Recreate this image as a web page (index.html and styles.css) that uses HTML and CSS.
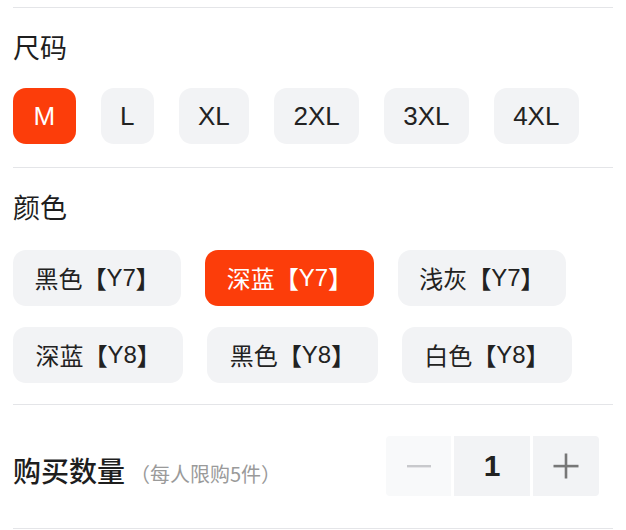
FILE: index.html
```html
<!DOCTYPE html>
<html lang="zh">
<head>
<meta charset="utf-8">
<link rel="stylesheet" href="styles.css">
</head>
<body>
<div class="panel">
  <section class="sec sec-size">
    <h2 class="title">尺码</h2>
    <div class="opts">
      <span class="opt active m">M</span>
      <span class="opt">L</span>
      <span class="opt">XL</span>
      <span class="opt">2XL</span>
      <span class="opt">3XL</span>
      <span class="opt">4XL</span>
    </div>
  </section>
  <section class="sec sec-color">
    <h2 class="title">颜色</h2>
    <div class="opts opts-color">
      <span class="opt copt"><span class="cn">黑色</span><span class="br">【</span>Y7<span class="br">】</span></span>
      <span class="opt copt active"><span class="cn">深蓝</span><span class="br">【</span>Y7<span class="br">】</span></span>
      <span class="opt copt"><span class="cn">浅灰</span><span class="br">【</span>Y7<span class="br">】</span></span>
      <span class="opt copt wide"><span class="cn">深蓝</span><span class="br">【</span>Y8<span class="br">】</span></span>
      <span class="opt copt wide"><span class="cn">黑色</span><span class="br">【</span>Y8<span class="br">】</span></span>
      <span class="opt copt wide"><span class="cn">白色</span><span class="br">【</span>Y8<span class="br">】</span></span>
    </div>
  </section>
  <section class="sec sec-qty">
    <div class="qty-label">
      <span class="qty-title">购买数量</span>
      <span class="qty-note">（每人限购5件）</span>
    </div>
    <div class="stepper">
      <span class="step minus"><svg width="26" height="26" viewBox="0 0 26 26"><rect x="1" y="12" width="24" height="2.4" fill="#c8c9cc"/></svg></span>
      <span class="step num">1</span>
      <span class="step plus"><svg width="26" height="26" viewBox="0 0 26 26"><rect x="0.5" y="11.8" width="25" height="2.6" fill="#777"/><rect x="11.7" y="0.5" width="2.6" height="25" fill="#777"/></svg></span>
    </div>
  </section>
  <div class="end-line"></div>
</div>
</body>
</html>
```
FILE: styles.css
```css
* { box-sizing: border-box; }
html, body { margin: 0; padding: 0; background: #fff; }
body {
  font-family: "Liberation Sans", "Noto Sans CJK SC", sans-serif;
  color: #222;
}
.panel {
  padding: 7px 13px 0 13px;
  width: 626px;
}
.sec {
  border-top: 1px solid #e4e5e8;
}
.title {
  margin: 0;
  font-family: "Noto Sans CJK SC", sans-serif;
  font-weight: 400;
  font-size: 27px;
  line-height: 32px;
  padding-top: 23px;
  color: #1e1e1e;
}
.opts {
  display: flex;
  flex-wrap: wrap;
  gap: 21px 24px;
}
.sec-size .opts { padding: 25px 0 23px; gap: 25px; }
.sec-color .opts { padding: 27px 0 21px; }
.opt {
  display: inline-flex;
  align-items: center;
  justify-content: center;
  height: 56px;
  padding: 0 19.3px;
  border-radius: 13px;
  background: #f2f3f5;
  color: #222;
  font-size: 26px;
  line-height: 1;
}
.opt.m { padding: 0 20.5px; }
.opt.active {
  background: #fc3d0a;
  color: #fff;
}
.copt {
  padding: 0 21.5px;
  font-size: 24px;
}
.copt.wide { padding: 0 22.5px; }
.cn, .br { font-family: "Noto Sans CJK SC", sans-serif; }
.br { font-weight: 700; }
.sec-qty {
  display: flex;
  align-items: center;
  justify-content: space-between;
  height: 124px;
  padding-right: 14px;
}
.qty-label {
  display: flex;
  align-items: baseline;
  font-family: "Noto Sans CJK SC", sans-serif;
  padding-top: 7px;
}
.qty-title {
  font-size: 28px;
  font-weight: 500;
  color: #1e1e1e;
}
.qty-note {
  font-size: 20px;
  color: #9a9a9a;
  margin-left: 5px;
}
.stepper {
  display: flex;
  gap: 3px;
  height: 60px;
  margin-top: -2px;
}
.step {
  display: flex;
  align-items: center;
  justify-content: center;
  background: #f2f3f5;
}
.minus { width: 65px; background: #f8f9fa; border-radius: 4px 0 0 4px; }
.num { width: 76px; font-size: 30px; font-weight: 700; color: #222; }
.plus { width: 66px; border-radius: 0 4px 4px 0; }
.end-line { border-top: 1px solid #e4e5e8; }
```
